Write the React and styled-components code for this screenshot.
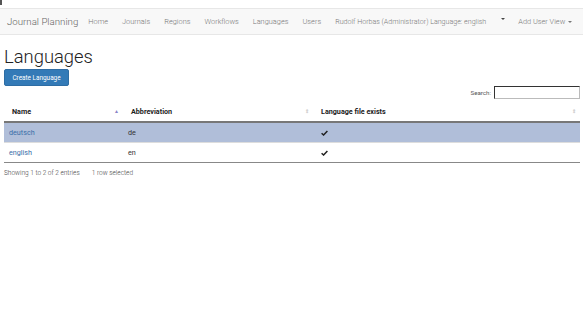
import React from 'react'
import styled, { createGlobalStyle } from 'styled-components'

const Global = createGlobalStyle`
  body {
    margin: 0;
    background: #fff;
    font-family: Roboto, "Liberation Sans", sans-serif;
    font-size: 8px;
    color: #333;
  }
`

const Mark = styled.div`
  width: 2px;
  height: 5px;
  background: #555;
`

const Navbar = styled.nav`
  margin-top: 3px;
  height: 25px;
  background: #f8f8f8;
  border-top: 1px solid #e7e7e7;
  border-bottom: 1px solid #e7e7e7;
  display: flex;
  align-items: center;
  padding-left: 7px;
  color: #777;
  white-space: nowrap;
`

const Brand = styled.span`
  font-size: 9.7px;
  font-weight: 300;
  color: #666;
  margin-right: 10px;
`

const NavItem = styled.span`
  font-size: ${p => p.size || 7.4}px;
  font-weight: 300;
  color: #777;
  margin-right: ${p => p.gap ?? 14}px;
  display: inline-flex;
  align-items: center;
`

const Caret = styled.span`
  display: inline-block;
  width: 0;
  height: 0;
  margin-left: 3px;
  border-top: 2px solid #777;
  border-left: 2px solid transparent;
  border-right: 2px solid transparent;
`

const LoneCaret = styled(Caret)`
  margin: -6px 13px 0 15px;
  border-top-color: #444;
`

const Content = styled.div`
  padding: 0 3px 0 4px;
`

const Title = styled.h1`
  margin: 10px 0 2px;
  font-size: 18.4px;
  font-weight: 300;
  color: #222;
  line-height: 23px;
`

const Button = styled.button`
  display: block;
  background: #337ab7;
  border: 1px solid #2e6da4;
  border-radius: 2px;
  color: #fff;
  font-family: inherit;
  font-size: 6.4px;
  height: 17px;
  width: 65px;
  padding: 0;
  margin-top: -1px;
`

const SearchBar = styled.div`
  display: flex;
  justify-content: flex-end;
  align-items: center;
  font-size: 6.2px;
  color: #555;
  gap: 3px;
`

const SearchInput = styled.input`
  width: 84px;
  height: 11px;
  border: 1px solid #bbb;
  border-top-color: #333;
  border-left-color: #333;
  padding: 0;
`

const Table = styled.table`
  width: 100%;
  table-layout: fixed;
  border-collapse: collapse;
  margin-top: 3px;
  border-bottom: 1px solid #888;
`

const Th = styled.th`
  position: relative;
  text-align: left;
  font-size: 7.2px;
  font-weight: 700;
  color: #222;
  height: 19px;
  padding: 0 8px;
  border-bottom: 2px solid #777;
  width: ${p => p.w || 'auto'};
  white-space: nowrap;
`

const SortIcon = styled.span`
  position: absolute;
  right: 4px;
  top: 6px;
  font-size: 5px;
  color: ${p => (p.active ? '#8b84c7' : '#ccc')};
`

const Tr = styled.tr`
  background: ${p => (p.selected ? '#b0bed9' : '#fff')};
`

const Td = styled.td`
  height: 19px;
  padding: 0 5px;
  font-size: 7.2px;
  color: #333;
  border-top: ${p => (p.first ? 'none' : '1px solid #ddd')};
`

const NameLink = styled.a`
  color: #3a6ea8;
  text-decoration: none;
`

const Check = styled.svg`
  display: block;
  width: 7px;
  height: 6px;
  margin-left: 3px;
`

const Info = styled.div`
  margin-top: 6px;
  font-size: 6.5px;
  font-weight: 300;
  color: #444;
  display: flex;
  gap: 12px;
  white-space: nowrap;
`

const rows = [
  { name: 'deutsch', abbr: 'de', selected: true },
  { name: 'english', abbr: 'en' },
]

const CheckIcon = () => (
  <Check viewBox="0 0 7 6">
    <path d="M0.6 3.2 L2.6 5 L6.4 1" fill="none" stroke="#222" strokeWidth="1.5" />
  </Check>
)

export default function App() {
  return (
    <>
      <Global />
      <Mark />
      <Navbar>
        <Brand>Journal Planning</Brand>
        <NavItem>Home</NavItem>
        <NavItem>Journals</NavItem>
        <NavItem>Regions</NavItem>
        <NavItem>Workflows</NavItem>
        <NavItem>Languages</NavItem>
        <NavItem>Users</NavItem>
        <NavItem gap={0} size={7.1}>Rudolf Horbas (Administrator) Language: english</NavItem>
        <LoneCaret />
        <NavItem>
          Add User View <Caret />
        </NavItem>
      </Navbar>
      <Content>
        <Title>Languages</Title>
        <Button>Create Language</Button>
        <SearchBar>
          Search: <SearchInput />
        </SearchBar>
        <Table>
          <thead>
            <tr>
              <Th w="103px">
                Name<SortIcon active>▲</SortIcon>
              </Th>
              <Th w="174px">
                Abbreviation<SortIcon>⇕</SortIcon>
              </Th>
              <Th>
                Language file exists<SortIcon>⇕</SortIcon>
              </Th>
            </tr>
          </thead>
          <tbody>
            {rows.map((r, i) => (
              <Tr key={r.name} selected={r.selected}>
                <Td first={i === 0}>
                  <NameLink href="#">{r.name}</NameLink>
                </Td>
                <Td first={i === 0}>{r.abbr}</Td>
                <Td first={i === 0}>
                  <CheckIcon />
                </Td>
              </Tr>
            ))}
          </tbody>
        </Table>
        <Info>
          <span>Showing 1 to 2 of 2 entries</span>
          <span>1 row selected</span>
        </Info>
      </Content>
    </>
  )
}
